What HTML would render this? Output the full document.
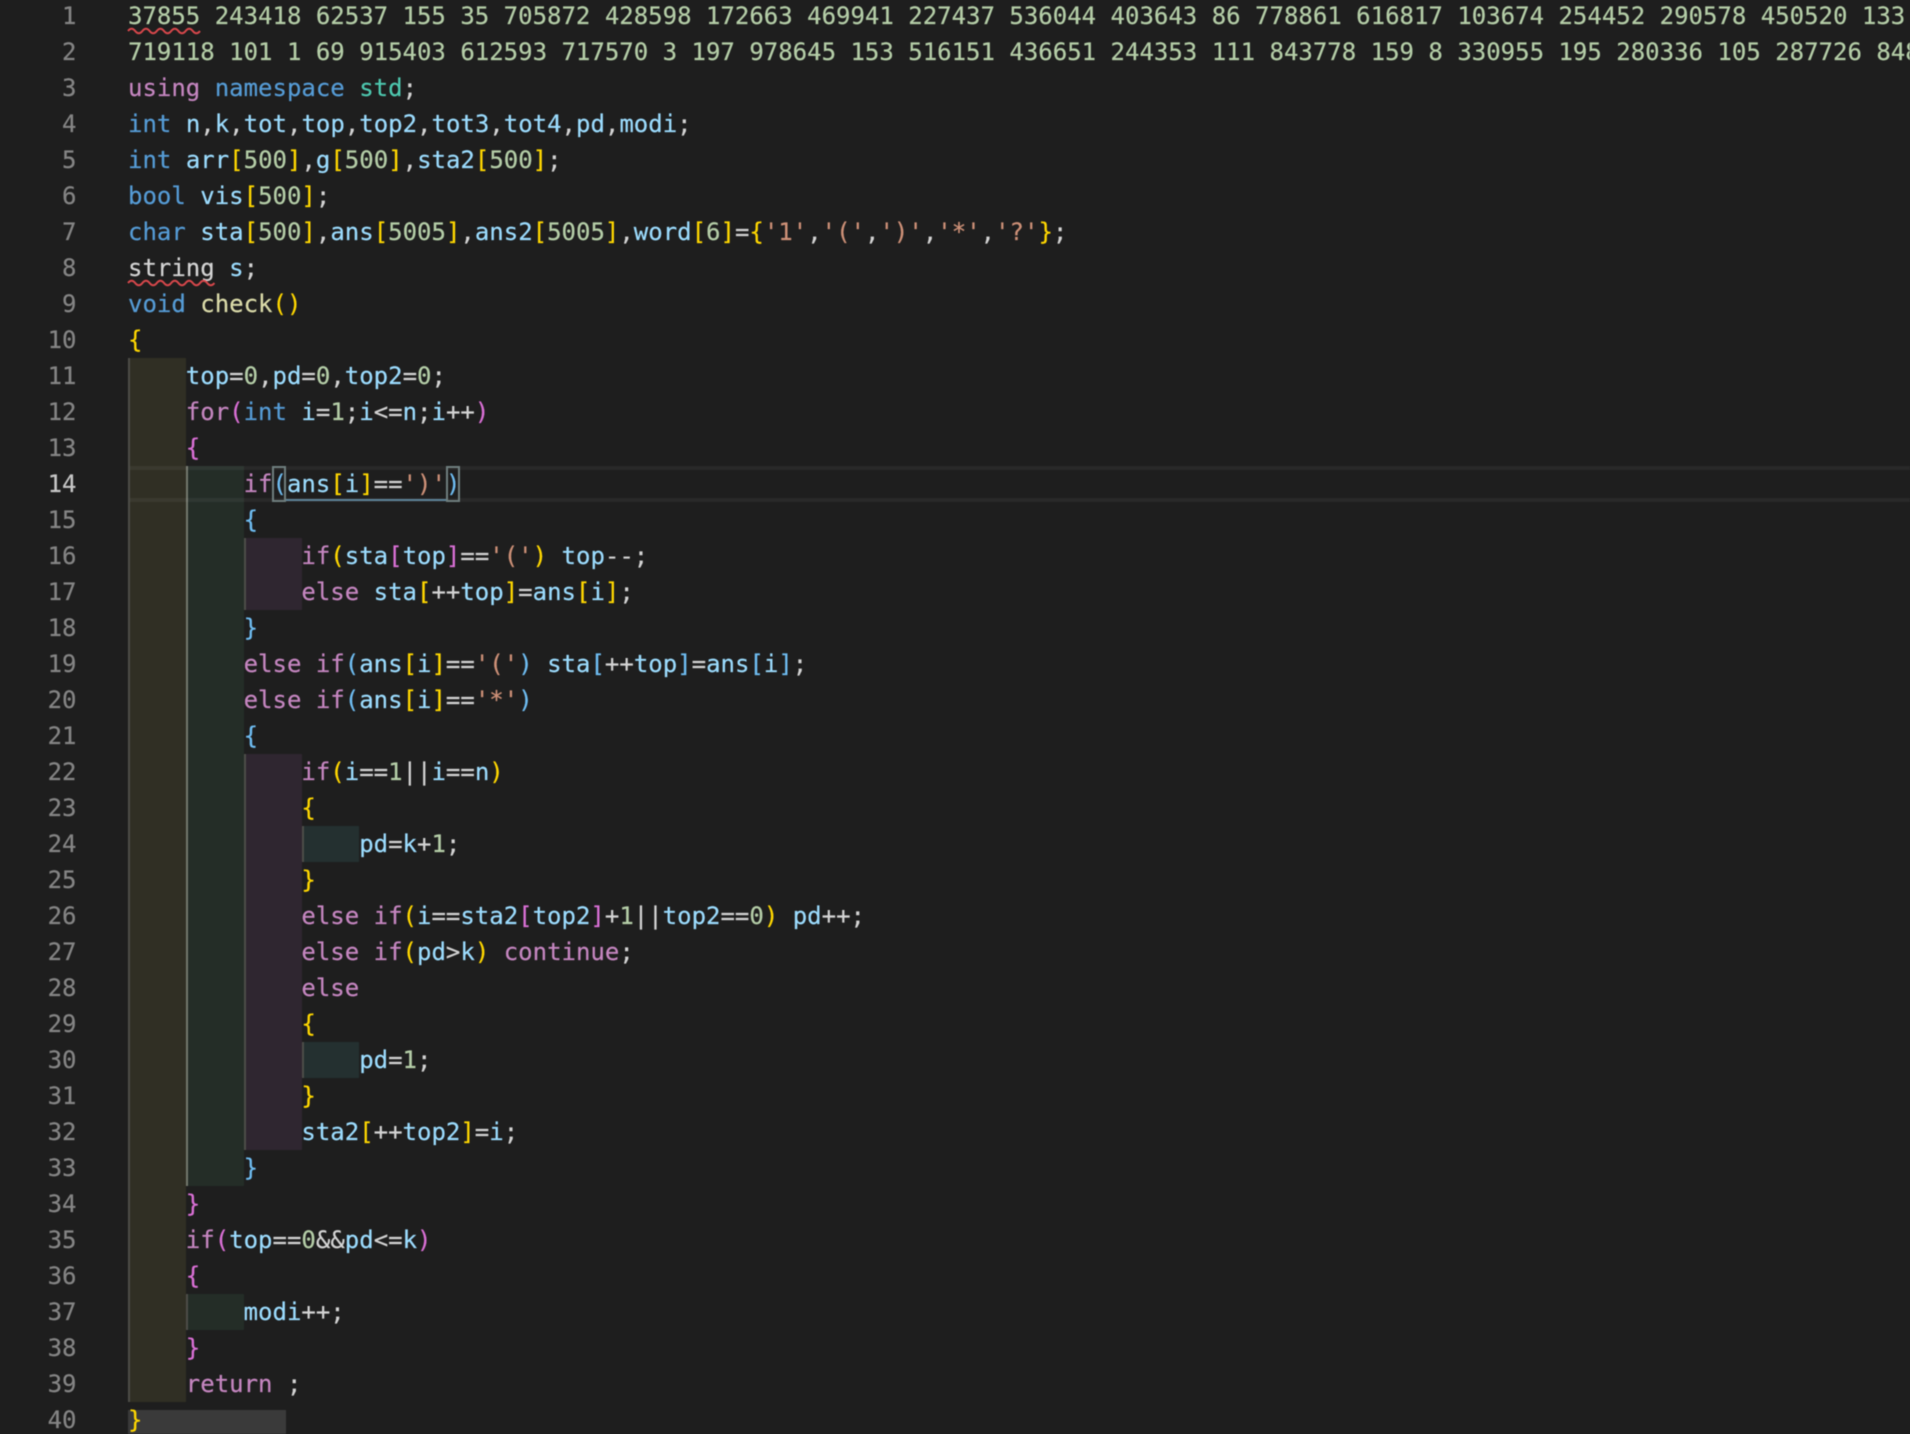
<!DOCTYPE html>
<html><head><meta charset="utf-8"><style>
html,body{margin:0;padding:0;width:1910px;height:1434px;overflow:hidden;background:#1e1e1e}
#w{position:absolute;left:0;top:0;width:1910px;height:1434px;overflow:hidden;filter:blur(.4px)}
.r{position:absolute}
#nums,#code{position:absolute;top:-2px;font:24px/36px "DejaVu Sans Mono","Liberation Mono",monospace;-webkit-text-stroke:.2px}
#nums{left:0;width:76.5px;text-align:right;color:#858585}
#code{left:128px;color:#d4d4d4}
#code div,#nums div{height:36px;white-space:pre}
.a{color:#c6c6c6}
i{font-style:normal}
.k{color:#c586c0}.t{color:#569cd6}.v{color:#9cdcfe}.n{color:#b5cea8}.s{color:#ce9178}.f{color:#dcdcaa}.c{color:#4ec9b0}
.g{color:#ffd700}.o{color:#da70d6}.b{color:#6fbdf2}
.b1{background:#302f24}.b2{background:#242d27}.b3{background:#2f2630}.b4{background:#243030}
.gd{background:#4d4d48;width:2px}
.ga{background:#72776c;width:2px}
svg{position:absolute;left:0;top:0}
</style></head><body><div id="w">
<div class="r b1" style="left:128px;top:358px;width:58px;height:1044px"></div>
<div class="r b2" style="left:186px;top:466px;width:58px;height:720px"></div>
<div class="r b2" style="left:186px;top:1294px;width:58px;height:36px"></div>
<div class="r b3" style="left:244px;top:538px;width:58px;height:72px"></div>
<div class="r b3" style="left:244px;top:754px;width:58px;height:396px"></div>
<div class="r b4" style="left:302px;top:826px;width:57px;height:36px"></div>
<div class="r b4" style="left:302px;top:1042px;width:57px;height:36px"></div>
<div class="r gd" style="left:128px;top:358px;height:1044px"></div>
<div class="r ga" style="left:186px;top:466px;height:720px"></div>
<div class="r gd" style="left:186px;top:1294px;height:36px"></div>
<div class="r gd" style="left:244px;top:538px;height:72px"></div>
<div class="r gd" style="left:244px;top:754px;height:396px"></div>
<div class="r gd" style="left:302px;top:826px;height:36px"></div>
<div class="r gd" style="left:302px;top:1042px;height:36px"></div>
<div class="r" style="left:130px;top:466px;width:1780px;height:4px;background:rgba(255,255,255,.05)"></div>
<div class="r" style="left:130px;top:498px;width:1780px;height:4px;background:rgba(255,255,255,.05)"></div>
<div class="r" style="left:128px;top:1410px;width:158px;height:24px;background:#3a3a3a"></div>
<div class="r" style="left:286px;top:499px;width:160px;height:2px;background:#5d8399"></div>
<div class="r" style="left:272px;top:466px;width:10px;height:32px;border:2px solid #6f7e7e"></div>
<div class="r" style="left:446px;top:466px;width:10px;height:32px;border:2px solid #6f7e7e"></div>
<div id="nums"><div>1</div><div>2</div><div>3</div><div>4</div><div>5</div><div>6</div><div>7</div><div>8</div><div>9</div><div>10</div><div>11</div><div>12</div><div>13</div><div class="a">14</div><div>15</div><div>16</div><div>17</div><div>18</div><div>19</div><div>20</div><div>21</div><div>22</div><div>23</div><div>24</div><div>25</div><div>26</div><div>27</div><div>28</div><div>29</div><div>30</div><div>31</div><div>32</div><div>33</div><div>34</div><div>35</div><div>36</div><div>37</div><div>38</div><div>39</div><div>40</div></div>
<div id="code">
<div class="n">37855 243418 62537 155 35 705872 428598 172663 469941 227437 536044 403643 86 778861 616817 103674 254452 290578 450520 133</div>
<div class="n">719118 101 1 69 915403 612593 717570 3 197 978645 153 516151 436651 244353 111 843778 159 8 330955 195 280336 105 287726 848</div>
<div><i class="k">using</i> <i class="t">namespace</i> <i class="c">std</i>;</div>
<div><i class="t">int</i> <i class="v">n</i>,<i class="v">k</i>,<i class="v">tot</i>,<i class="v">top</i>,<i class="v">top2</i>,<i class="v">tot3</i>,<i class="v">tot4</i>,<i class="v">pd</i>,<i class="v">modi</i>;</div>
<div><i class="t">int</i> <i class="v">arr</i><i class="g">[</i><i class="n">500</i><i class="g">]</i>,<i class="v">g</i><i class="g">[</i><i class="n">500</i><i class="g">]</i>,<i class="v">sta2</i><i class="g">[</i><i class="n">500</i><i class="g">]</i>;</div>
<div><i class="t">bool</i> <i class="v">vis</i><i class="g">[</i><i class="n">500</i><i class="g">]</i>;</div>
<div><i class="t">char</i> <i class="v">sta</i><i class="g">[</i><i class="n">500</i><i class="g">]</i>,<i class="v">ans</i><i class="g">[</i><i class="n">5005</i><i class="g">]</i>,<i class="v">ans2</i><i class="g">[</i><i class="n">5005</i><i class="g">]</i>,<i class="v">word</i><i class="g">[</i><i class="n">6</i><i class="g">]</i>=<i class="g">{</i><i class="s">'1'</i>,<i class="s">'('</i>,<i class="s">')'</i>,<i class="s">'*'</i>,<i class="s">'?'</i><i class="g">}</i>;</div>
<div>string <i class="v">s</i>;</div>
<div><i class="t">void</i> <i class="f">check</i><i class="g">()</i></div>
<div><i class="g">{</i></div>
<div>    <i class="v">top</i>=<i class="n">0</i>,<i class="v">pd</i>=<i class="n">0</i>,<i class="v">top2</i>=<i class="n">0</i>;</div>
<div>    <i class="k">for</i><i class="o">(</i><i class="t">int</i> <i class="v">i</i>=<i class="n">1</i>;<i class="v">i</i>&lt;=<i class="v">n</i>;<i class="v">i</i>++<i class="o">)</i></div>
<div>    <i class="o">{</i></div>
<div>        <i class="k">if</i><i class="b">(</i><i class="v">ans</i><i class="g">[</i><i class="v">i</i><i class="g">]</i>==<i class="s">')'</i><i class="b">)</i></div>
<div>        <i class="b">{</i></div>
<div>            <i class="k">if</i><i class="g">(</i><i class="v">sta</i><i class="o">[</i><i class="v">top</i><i class="o">]</i>==<i class="s">'('</i><i class="g">)</i> <i class="v">top</i>--;</div>
<div>            <i class="k">else</i> <i class="v">sta</i><i class="g">[</i>++<i class="v">top</i><i class="g">]</i>=<i class="v">ans</i><i class="g">[</i><i class="v">i</i><i class="g">]</i>;</div>
<div>        <i class="b">}</i></div>
<div>        <i class="k">else</i> <i class="k">if</i><i class="b">(</i><i class="v">ans</i><i class="g">[</i><i class="v">i</i><i class="g">]</i>==<i class="s">'('</i><i class="b">)</i> <i class="v">sta</i><i class="b">[</i>++<i class="v">top</i><i class="b">]</i>=<i class="v">ans</i><i class="b">[</i><i class="v">i</i><i class="b">]</i>;</div>
<div>        <i class="k">else</i> <i class="k">if</i><i class="b">(</i><i class="v">ans</i><i class="g">[</i><i class="v">i</i><i class="g">]</i>==<i class="s">'*'</i><i class="b">)</i></div>
<div>        <i class="b">{</i></div>
<div>            <i class="k">if</i><i class="g">(</i><i class="v">i</i>==<i class="n">1</i>||<i class="v">i</i>==<i class="v">n</i><i class="g">)</i></div>
<div>            <i class="g">{</i></div>
<div>                <i class="v">pd</i>=<i class="v">k</i>+<i class="n">1</i>;</div>
<div>            <i class="g">}</i></div>
<div>            <i class="k">else</i> <i class="k">if</i><i class="g">(</i><i class="v">i</i>==<i class="v">sta2</i><i class="o">[</i><i class="v">top2</i><i class="o">]</i>+<i class="n">1</i>||<i class="v">top2</i>==<i class="n">0</i><i class="g">)</i> <i class="v">pd</i>++;</div>
<div>            <i class="k">else</i> <i class="k">if</i><i class="g">(</i><i class="v">pd</i>&gt;<i class="v">k</i><i class="g">)</i> <i class="k">continue</i>;</div>
<div>            <i class="k">else</i></div>
<div>            <i class="g">{</i></div>
<div>                <i class="v">pd</i>=<i class="n">1</i>;</div>
<div>            <i class="g">}</i></div>
<div>            <i class="v">sta2</i><i class="g">[</i>++<i class="v">top2</i><i class="g">]</i>=<i class="v">i</i>;</div>
<div>        <i class="b">}</i></div>
<div>    <i class="o">}</i></div>
<div>    <i class="k">if</i><i class="o">(</i><i class="v">top</i>==<i class="n">0</i>&amp;&amp;<i class="v">pd</i>&lt;=<i class="v">k</i><i class="o">)</i></div>
<div>    <i class="o">{</i></div>
<div>        <i class="v">modi</i>++;</div>
<div>    <i class="o">}</i></div>
<div>    <i class="k">return</i> ;</div>
<div><i class="g">}</i></div>
</div>
<svg width="1910" height="1434" fill="none" stroke="#d9484c" stroke-width="2">
<path d="M128 31q3.6-4.5 7.2 0t7.2 0 7.2 0 7.2 0 7.2 0 7.2 0 7.2 0 7.2 0 7.2 0 7.2 0"/>
<path d="M128 283q3.6-4.5 7.2 0t7.2 0 7.2 0 7.2 0 7.2 0 7.2 0 7.2 0 7.2 0 7.2 0 7.2 0 7.2 0 7.2 0"/>
</svg>
</div></body></html>
